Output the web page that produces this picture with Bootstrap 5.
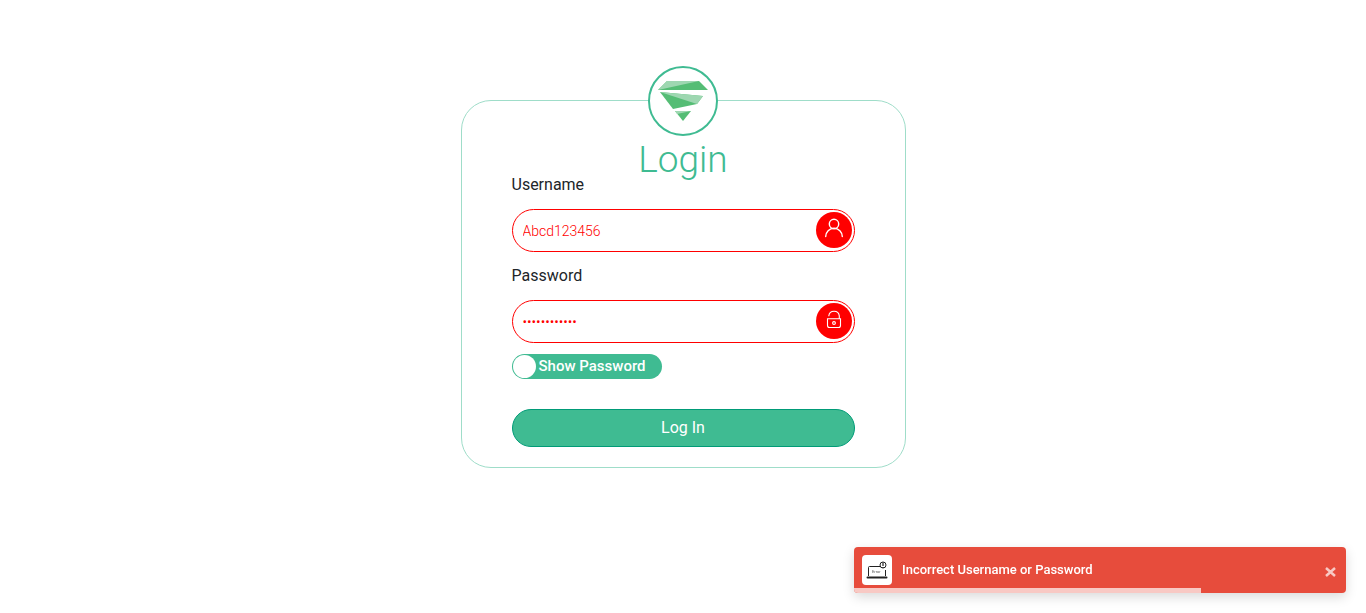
<!DOCTYPE html>
<html lang="en">
<head>
<meta charset="utf-8">
<meta name="viewport" content="width=device-width, initial-scale=1">
<title>Login</title>
<link href="https://cdn.jsdelivr.net/npm/bootstrap@5.3.0/dist/css/bootstrap.min.css" rel="stylesheet">
<style>
  :root { --brand: #3fbb92; --brand-dark: #009b77; --danger: #ff0000; }
  body { font-family: Roboto, sans-serif; font-weight: 400; color: #212529; background: #fff; }
  .login-main { padding-top: 100px; }
  .login-box { max-width: 445px; border: 1px solid #9fddc9; border-radius: 30px; padding: 46px 50px 20px; }
  .brand-mark { width: 70px; height: 70px; top: 0; left: 50%; transform: translate(-50%, -50%); border: 2px solid var(--brand); background: #fff; }
  .login-title { font-size: 37px; line-height: 26px; font-weight: 300; color: var(--brand); margin: 0; }
  .login-box .form-label { font-size: 16px; line-height: 24px; font-weight: 400; margin: 0 0 12px; display: block; }
  .login-box .form-control { height: 43px; border: 1px solid var(--danger); border-radius: 22px; font-size: 14px; font-weight: 300; color: var(--danger); padding: 6px 48px 6px 10px; background: #fff; }
  .field-icon { width: 36px; height: 36px; right: 3px; top: 3px; background: var(--danger); }
  .show-toggle { width: 150px; height: 25px; margin-top: 11px; border-radius: 13px; background: var(--brand); color: #fff; font-size: 15px; line-height: 24px; font-weight: 500; cursor: pointer; }
  .show-toggle input { appearance: none; width: 23px; height: 23px; margin: 1px 3px 1px 1px; border-radius: 50%; background: #fff; }
  .login-btn { height: 38px; border: 1px solid var(--brand-dark); border-radius: 19px; background: var(--brand); color: #fff; font-size: 16px; line-height: 24px; font-weight: 400; margin-top: 30px; padding: 6px 12px; }
  .login-btn:hover { background: var(--brand-dark); color: #fff; }
  .alert-toast { width: 492px; max-width: calc(100% - 40px); height: 46px; right: 20px; bottom: 20px; border-radius: 4px; background: #e74c3c; box-shadow: 0 4px 12px rgba(0, 0, 0, .15); padding: 8px; }
  .alert-icon { width: 30px; height: 30px; border-radius: 4px; background: #fff; }
  .alert-text { color: #fff; font-size: 13px; line-height: 16px; font-weight: 500; margin: 0 0 0 10px; }
  .alert-close { border: 0; background: none; padding: 4px 0 0; line-height: 0; }
  .alert-timer { height: 5px; left: 0; bottom: 0; background: #f8c9c4; }
</style>
</head>
<body>
<main class="login-main container-fluid">
  <form class="login-box position-relative mx-auto" onsubmit="return false">
    <div class="brand-mark position-absolute rounded-circle d-flex align-items-center justify-content-center">
      <svg width="66" height="66" viewBox="0 0 66 66" aria-hidden="true">
        <path d="M8 22L17 13H49L58 22Z" fill="#55bd75"/>
        <path d="M8 22L17 13H49Z" fill="#9ed7b1"/>
        <path d="M10 24L53 28L47 36L23 41Z" fill="#55bd75"/>
        <path d="M10 24L53 28L47 36Z" fill="#9ed7b1"/>
        <path d="M25 43H41L33 53Z" fill="#55bd75"/>
        <path d="M25 43H41L27 46Z" fill="#9ed7b1"/>
      </svg>
    </div>
    <h1 class="login-title text-center">Login</h1>
    <label class="form-label" for="username">Username</label>
    <div class="position-relative mb-2 pb-1">
      <input class="form-control" id="username" type="text" value="Abcd123456">
      <span class="field-icon position-absolute rounded-circle">
        <svg class="d-block" width="36" height="36" viewBox="0 0 36 36" fill="none" stroke="#fff" stroke-width="1.4" stroke-linecap="round" aria-hidden="true">
          <circle cx="18" cy="12" r="4.7"/><path d="M9.7 24.5a8.3 8.3 0 0 1 16.6 0"/>
        </svg>
      </span>
    </div>
    <label class="form-label" for="password">Password</label>
    <div class="position-relative">
      <input class="form-control" id="password" type="password" value="Abcd12345678">
      <span class="field-icon position-absolute rounded-circle">
        <svg class="d-block" width="36" height="36" viewBox="0 0 36 36" fill="none" stroke="#fff" stroke-width="1.1" stroke-linecap="round" aria-hidden="true">
          <path d="M11.500 15.700h13v6.800a2 2 0 0 1-2 2h-9a2 2 0 0 1-2-2zM12.800 12.800a5.300 5.300 0 0 1 10.500 0v2.900"/><circle cx="18" cy="20" r="1.4"/>
        </svg>
      </span>
    </div>
    <label class="show-toggle d-flex align-items-start" for="show"><input id="show" type="checkbox">Show Password</label>
    <button class="login-btn btn w-100 d-block" type="submit">Log In</button>
  </form>
</main>
<div class="alert-toast position-fixed d-flex align-items-center overflow-hidden" role="alert">
  <span class="alert-icon">
    <svg class="d-block" width="30" height="30" viewBox="0 0 30 30" fill="none" stroke="#222" aria-hidden="true">
      <path d="M18 11.500H7.500q-1 0-1 1V21M23.500 15v6" stroke-width="1"/>
      <path d="M5.500 22.500h19" stroke-width="2" stroke-linecap="round"/>
      <circle cx="21" cy="10" r="3" stroke-width="1"/><path d="M21 7.500v3.500m0 1v1" stroke-width="1.200"/>
      <text x="10" y="18" font-size="4" fill="#555" stroke="none">Error</text>
    </svg>
  </span>
  <p class="alert-text">Incorrect Username or Password</p>
  <button class="alert-close ms-auto" type="button" aria-label="Close">
    <svg width="18" height="12" viewBox="0 0 18 12" aria-hidden="true"><path d="M6 2l9 8M15 2l-9 8" stroke="#f8c9c4" stroke-width="2.500"/></svg>
  </button>
  <div class="alert-timer position-absolute" style="width:70.5%"></div>
</div>
<script src="https://cdn.jsdelivr.net/npm/bootstrap@5.3.0/dist/js/bootstrap.bundle.min.js"></script>
<script>
  document.getElementById('show').addEventListener('change', e => {
    document.getElementById('password').type = e.target.checked ? 'text' : 'password';
  });
</script>
</body>
</html>
